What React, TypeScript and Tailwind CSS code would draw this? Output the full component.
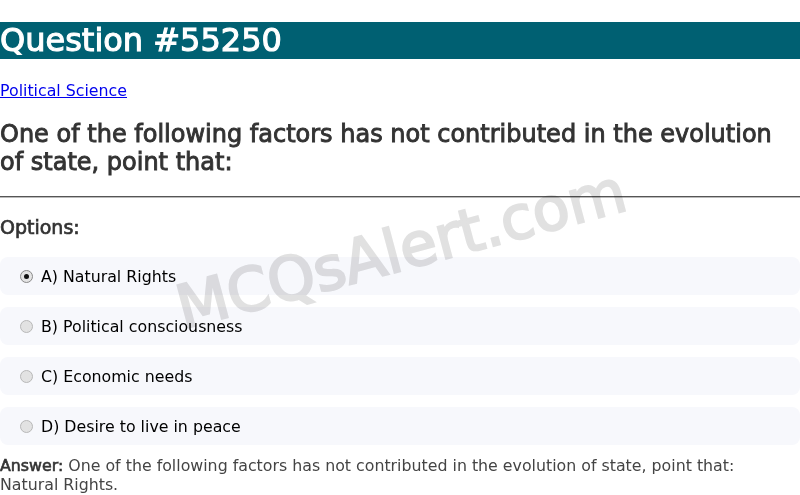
import React from "react";

const options = [
  { label: "A) Natural Rights", checked: true },
  { label: "B) Political consciousness", checked: false },
  { label: "C) Economic needs", checked: false },
  { label: "D) Desire to live in peace", checked: false },
];

function Radio({ checked }: { checked: boolean }) {
  return (
    <span
      className={
        "flex h-[13px] w-[13px] shrink-0 items-center justify-center rounded-full border " +
        (checked ? "border-[#8a8a8a] bg-[#e4e4e4]" : "border-[#b8b8b8] bg-[#e2e2e2]")
      }
    >
      {checked && <span className="h-[5px] w-[5px] rounded-full bg-[#111]" />}
    </span>
  );
}

export default function App() {
  return (
    <div
      className="relative w-full overflow-hidden bg-white text-[15.8px] text-black"
      style={{ fontFamily: '"DejaVu Sans", sans-serif' }}
    >
      {/* Header */}
      <h1 className="mt-[22px] h-[37px] bg-[#006072] text-[32px] font-normal leading-[37px] text-white [-webkit-text-stroke:1.1px_currentColor]">
        Question #55250
      </h1>

      <a href="#" className="mt-[22px] block w-fit leading-[19px] text-[#0000ee] underline">
        Political Science
      </a>

      <h2 className="mt-[20px] text-[24px] font-normal leading-[28px] text-[#333] [-webkit-text-stroke:0.9px_currentColor]">
        One of the following factors has not contributed in the evolution of state, point that:
      </h2>

      <hr className="mt-[20px] border-t border-b border-t-[#555] border-b-[#bbb]" />

      <h3 className="mt-[18px] text-[19px] font-normal leading-[22px] text-[#333] [-webkit-text-stroke:0.7px_currentColor]">
        Options:
      </h3>

      {/* Options */}
      <div className="mt-[19px] flex flex-col gap-[12px]">
        {options.map((o) => (
          <label
            key={o.label}
            className="flex h-[38px] items-center gap-[8px] rounded-[8px] bg-[#f7f8fc] px-[20px] leading-[19px]"
          >
            <Radio checked={o.checked} />
            <span>{o.label}</span>
          </label>
        ))}
      </div>

      <p className="mt-[11px] leading-[19px] text-[#444]">
        <strong className="font-normal text-[#333] [-webkit-text-stroke:0.6px_currentColor]">Answer:</strong>{" "}
        One of the following factors has not contributed in the evolution of state, point that:
        <br />
        Natural Rights.
      </p>

      {/* Watermark */}
      <div className="pointer-events-none absolute left-[401px] top-[249px] -translate-x-1/2 -translate-y-1/2 -rotate-[15deg] whitespace-nowrap text-[60px] font-normal leading-none text-[#e1e1e1] mix-blend-multiply [-webkit-text-stroke:2.2px_#e1e1e1]">
        MCQsAlert.com
      </div>
    </div>
  );
}
